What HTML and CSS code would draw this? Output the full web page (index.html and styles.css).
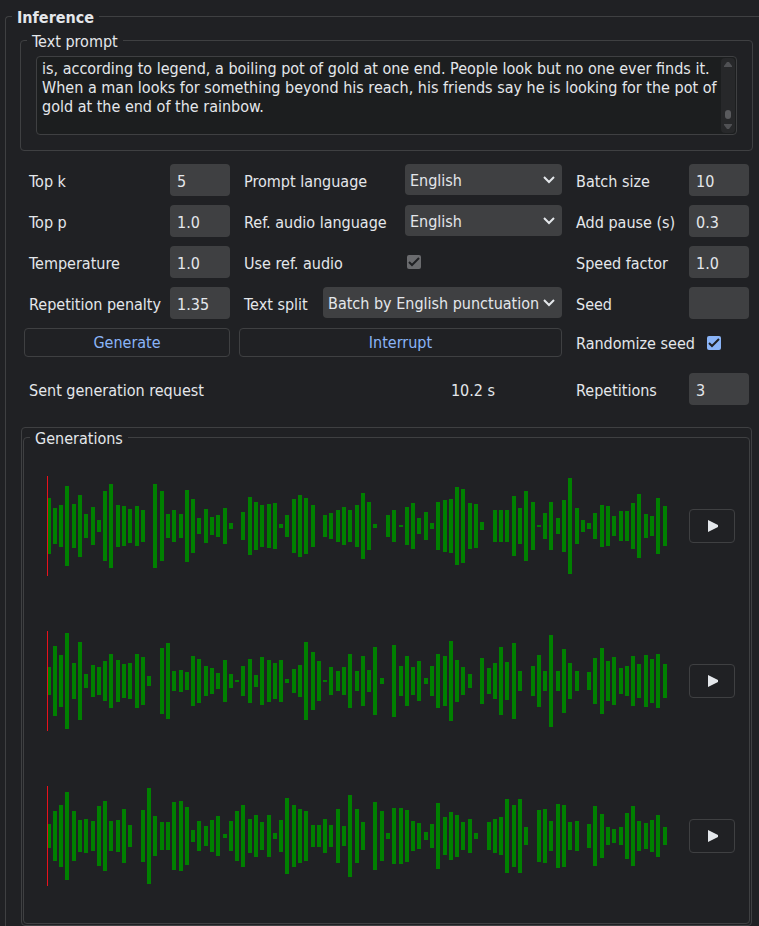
FILE: index.html
```html
<!DOCTYPE html>
<html lang="en">
<head>
<meta charset="utf-8">
<title>Inference</title>
<link rel="stylesheet" href="styles.css">
</head>
<body>
<fieldset class="group inference">
  <legend class="title">Inference</legend>

  <fieldset class="group prompt">
    <legend>Text prompt</legend>
    <div class="prompt-box">
      <textarea class="prompt-text" aria-label="Text prompt" rows="4">is, according to legend, a boiling pot of gold at one end. People look but no one ever finds it. When a man looks for something beyond his reach, his friends say he is looking for the pot of gold at the end of the rainbow.</textarea>
      <div class="scrollbar" aria-hidden="true">
        <svg class="arrow" viewBox="0 0 8 5"><path d="M0 5V4L3 0h2l3 4v1z"/></svg>
        <span class="thumb"></span>
        <svg class="arrow" viewBox="0 0 8 5"><path d="M0 0v1l3 4h2l3-4V0z"/></svg>
      </div>
    </div>
  </fieldset>

  <div class="settings">
    <div class="field"><label for="topk">Top k</label><input class="num" id="topk" type="text" value="5"></div>
    <div class="field"><label for="plang">Prompt language</label><span class="pick"><select id="plang"><option>English</option></select><svg class="chevron" viewBox="0 0 12 8"><path d="M1 1l5 5 5-5"/></svg></span></div>
    <div class="field"><label for="batch">Batch size</label><input class="num" id="batch" type="text" value="10"></div>

    <div class="field"><label for="topp">Top p</label><input class="num" id="topp" type="text" value="1.0"></div>
    <div class="field"><label for="rlang">Ref. audio language</label><span class="pick"><select id="rlang"><option>English</option></select><svg class="chevron" viewBox="0 0 12 8"><path d="M1 1l5 5 5-5"/></svg></span></div>
    <div class="field"><label for="pause">Add pause (s)</label><input class="num" id="pause" type="text" value="0.3"></div>

    <div class="field"><label for="temp">Temperature</label><input class="num" id="temp" type="text" value="1.0"></div>
    <div class="field"><label for="useref">Use ref. audio</label><span class="tick wide"><input id="useref" type="checkbox" checked disabled><svg class="check" viewBox="0 0 14 14"><path d="M2 7l3 3 7-7"/></svg></span></div>
    <div class="field"><label for="speed">Speed factor</label><input class="num" id="speed" type="text" value="1.0"></div>

    <div class="field"><label for="rep">Repetition penalty</label><input class="num" id="rep" type="text" value="1.35"></div>
    <div class="field"><label for="split">Text split</label><span class="pick long"><select id="split"><option>Batch by English punctuation</option></select><svg class="chevron" viewBox="0 0 12 8"><path d="M1 1l5 5 5-5"/></svg></span></div>
    <div class="field"><label for="seed">Seed</label><input class="num" id="seed" type="text" value=""></div>

    <button class="action" type="button">Generate</button>
    <button class="action" type="button">Interrupt</button>
    <div class="field short"><label for="random">Randomize seed</label><span class="tick"><input id="random" type="checkbox" checked><svg class="check" viewBox="0 0 14 14"><path d="M2 7l3 3 7-7"/></svg></span></div>

    <div class="status"><span>Sent generation request</span><span>10.2 s</span></div>
    <div class="field last"><label for="reps">Repetitions</label><input class="num" id="reps" type="text" value="3"></div>
  </div>

  <div class="frame">
    <fieldset class="group generations">
      <legend>Generations</legend>
      <div id="clips"></div>
    </fieldset>
  </div>
</fieldset>
<script src="app.js"></script>
</body>
</html>
```
FILE: styles.css
```css
* { box-sizing: border-box; }

body {
  margin: 0;
  background: #202124;
  color: #e4e7eb;
  font: 16px/19px "DejaVu Sans Condensed", "Noto Sans", sans-serif;
}

input, select, textarea, button { font: inherit; color: inherit; margin: 0; }

.group {
  margin: 0;
  min-width: 0;
  border: 1px solid #3f4042;
  border-radius: 4px;
}

legend { padding: 2px 5px 0; line-height: 17px; }

.inference {
  min-height: calc(100vh - 7px);
  margin: 7px 0 0 5px;
  padding: 5px 6px 0 14px;
  border-right: 0;
  border-bottom: 0;
  border-radius: 4px 0 0 0;
}

.title { margin-left: -8px; font-weight: bold; }

.prompt { padding: 6px 15px 15px; }
.prompt legend { margin-left: -9px; }

.prompt-box {
  position: relative;
  height: 79px;
  border: 1px solid #3f4042;
  border-radius: 4px;
  background: #1c1e1f;
}

.prompt-text {
  display: block;
  width: 100%;
  height: 77px;
  padding: 2px 16px 0 5px;
  border: 0;
  outline: 0;
  resize: none;
  overflow: hidden;
  background: transparent;
}

.scrollbar {
  position: absolute;
  top: 1px;
  right: 1px;
  bottom: 1px;
  width: 14px;
  padding: 4px 3px;
  display: flex;
  flex-direction: column;
  align-items: center;
  border-radius: 4px;
  background: #27282a;
}

.arrow { width: 8px; height: 5px; fill: #505154; }

.thumb {
  width: 6px;
  height: 9px;
  margin: auto 0 5px;
  border-radius: 3px;
  background: #5a5b5e;
}

.settings {
  display: grid;
  grid-template-columns: 206px 1fr 178px;
  gap: 9px;
  padding: 13px 4px 22px;
}

.field {
  display: flex;
  align-items: center;
  justify-content: space-between;
  height: 32px;
  padding-left: 5px;
}

.field.short { height: 29px; }
.field.last, .status { margin-top: 7px; }

.num {
  width: 60px;
  height: 32px;
  padding: 2px 7px 0;
  border: 0;
  border-radius: 4px;
  background: #3f4042;
}

.field label { padding-top: 2px; }

.pick {
  position: relative;
  width: 157px;
  height: 32px;
}

.pick.long { width: 239px; }

select {
  width: 100%;
  height: 31px;
  padding: 1px 5px 0;
  border: 0;
  border-radius: 4px;
  appearance: none;
  background: #3f4042;
}

.chevron {
  position: absolute;
  top: 12px;
  right: 7px;
  width: 12px;
  height: 8px;
  fill: none;
  stroke: #e4e7eb;
  stroke-width: 2;
  pointer-events: none;
}

.tick {
  position: relative;
  width: 42px;
  height: 14px;
}

.tick.wide { width: 155px; }

.tick input {
  display: block;
  width: 14px;
  height: 14px;
  appearance: none;
  border-radius: 2px;
  background: #8ab4f7;
}

.tick input:disabled { background: #6a6b6e; }

.check {
  position: absolute;
  top: 0;
  left: 0;
  width: 14px;
  height: 14px;
  fill: none;
  stroke: #202124;
  stroke-width: 2;
  pointer-events: none;
}

.action {
  height: 29px;
  padding: 0;
  border: 1px solid #3f4042;
  border-radius: 4px;
  background: transparent;
  color: #8ab4f7;
}

.status {
  grid-column: span 2;
  display: flex;
  align-items: center;
  justify-content: space-between;
  padding: 2px 67px 0 5px;
}

.frame {
  margin: 0 1px;
  padding: 0 1px 1px;
  border: 1px solid #3f4042;
  border-radius: 4px;
}

.generations { padding: 1px 14px 10px 23px; }
.generations legend { margin-left: -17px; }

.clip {
  display: flex;
  align-items: center;
  gap: 22px;
  height: 155px;
}

.wave {
  flex: 1;
  min-width: 0;
  height: 100px;
  shape-rendering: crispEdges;
}

.bar { fill: #008000; }
.cursor { fill: #e8121c; }

.play {
  display: flex;
  align-items: center;
  justify-content: center;
  width: 46px;
  height: 34px;
  padding: 0 0 0 2px;
  border: 1px solid #3f4042;
  border-radius: 4px;
  background: transparent;
}

.play svg { width: 10px; height: 12px; fill: #e4e7eb; }
```
FILE: app.js
```js
// Half-heights of the loudness bars of each generated clip.
const clips = [
  [28,18,21,40,22,31,12,19,6,35,42,21,20,17,20,16,0,42,35,12,16,12,36,27,8,17,9,11,18,3,0,14,29,24,21,22,23,2,11,27,31,28,21,0,11,13,16,19,16,21,33,24,2,0,11,16,1,19,23,8,14,3,24,26,27,39,37,23,22,4,0,16,16,16,30,18,35,24,1,13,24,8,26,48,18,6,3,13,21,20,10,15,15,23,32,12,10,28,20],
  [14,35,26,48,18,39,7,16,14,20,27,21,17,18,27,24,5,0,33,38,10,11,9,25,22,15,13,8,21,7,1,15,22,6,24,21,18,21,2,12,16,39,29,20,1,14,10,14,27,10,25,11,34,3,0,36,15,25,14,20,3,15,27,25,40,21,14,7,0,23,13,18,34,19,38,10,0,15,26,10,46,10,32,18,10,0,9,23,33,20,24,13,15,25,17,26,22,27,17],
  [12,25,31,44,25,16,17,15,30,35,15,16,27,11,0,26,48,20,14,14,34,35,29,6,15,10,16,20,2,15,25,31,17,21,14,21,3,16,38,31,27,25,11,11,17,11,27,10,41,27,14,0,34,25,3,28,28,26,15,13,4,12,33,19,24,21,14,17,3,0,14,17,19,37,31,37,9,0,26,27,15,32,31,14,15,0,12,30,22,9,7,9,23,30,15,13,16,21,9]
];

document.getElementById("clips").innerHTML = clips.map((levels, n) => {
  const bars = levels.map((h, i) =>
    h ? `<rect class="bar" x="${Math.floor(i * 44 / 7)}" y="${50 - h}" width="4" height="${2 * h}"/>` : ""
  ).join("");
  return `<div class="clip">
    <svg class="wave" viewBox="0 0 620 100" preserveAspectRatio="none" role="img" aria-label="Waveform ${n + 1}">${bars}<rect class="cursor" x="0" y="0" width="1" height="100"/></svg>
    <button class="play" type="button" aria-label="Play ${n + 1}"><svg viewBox="0 0 10 12"><path d="M0 0l10 5v2L0 12z"/></svg></button>
  </div>`;
}).join("");
```
